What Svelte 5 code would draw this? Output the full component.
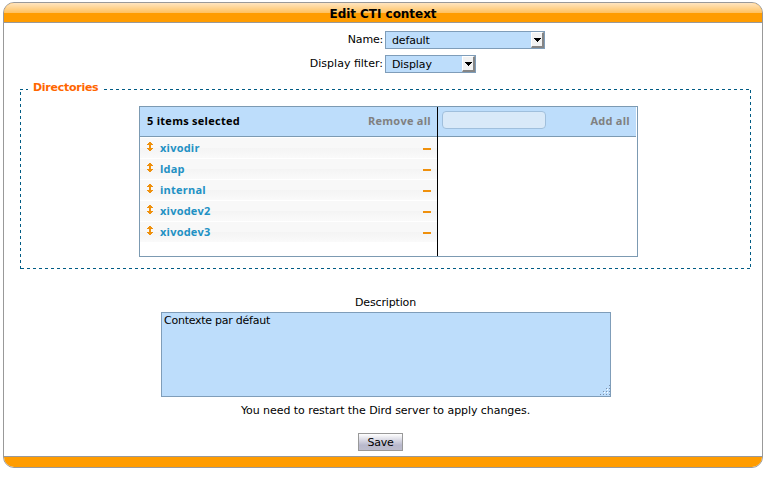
<script>
  const items = ['xivodir', 'ldap', 'internal', 'xivodev2', 'xivodev3'];
</script>

{#snippet selectBox(label, kind)}
  <div class="select {kind}" role="combobox" aria-expanded="false" aria-controls="none" tabindex="0">
    <span>{label}</span>
    <i class="drop"><svg width="7" height="4" shape-rendering="crispEdges"><path d="M0 0H7V1H6V2H5V3H4V4H3V3H2V2H1V1H0Z" /></svg></i>
  </div>
{/snippet}

<main class="panel">
  <header><span class="title">Edit CTI context</span></header>
  <section class="body">
    <div class="field first"><span class="label name-label">Name:</span>{@render selectBox('default', 'name')}</div>
    <div class="field"><span class="label filter-label">Display filter:</span>{@render selectBox('Display', 'filter')}</div>

    <div class="group">
      <div class="legend"><span>Directories</span></div>
      <div class="picker">
        <div class="selected">
          <div class="bar"><span class="count">5 items selected</span><span class="action remove">Remove all</span></div>
          <ul>
            {#each items as item}
              <li>
                <svg class="sort" width="6" height="9" viewBox="0 0 6 9" shape-rendering="crispEdges"><path d="M2 0H4V1H5V2H6V3H4V6H6V7H5V8H4V9H2V8H1V7H0V6H2V3H0V2H1V1H2Z" /></svg>
                <span class="item">{item}</span>
                <i class="minus"></i>
              </li>
            {/each}
          </ul>
        </div>
        <div class="available">
          <div class="bar"><div class="search"></div><span class="action add">Add all</span></div>
        </div>
      </div>
    </div>

    <div class="desc-label"><span>Description</span></div>
    <div class="textarea"><span>Contexte par défaut</span>
      <svg class="grip" width="10" height="10" shape-rendering="crispEdges">
        {#each [0, 1, 2, 3] as r}
          {#each [0, 1, 2, 3] as c}
            {#if r + c >= 3}
              <rect x={c * 3} y={r * 3} width="1" height="1" fill="#7c90aa" />
              <rect x={c * 3 + 1} y={r * 3 + 1} width="1" height="1" fill="#fff" />
            {/if}
          {/each}
        {/each}
      </svg>
    </div>
    <p class="note"><span>You need to restart the Dird server to apply changes.</span></p>
    <div class="save"><span>Save</span></div>
  </section>
  <footer></footer>
</main>

<style>
  :global(body) { margin: 0; background: #fff; }
  .panel {
    box-sizing: border-box; width: 760px; height: 466px; margin: 2px 0 0 3px;
    border: 1px solid #999; border-radius: 11px; overflow: hidden;
    font: 11px/14px "DejaVu Sans", Verdana, sans-serif; color: #000;
    display: flex; flex-direction: column;
  }
  span { white-space: nowrap; }
  header {
    height: 19px; border-bottom: 1px solid #999; text-align: center; flex: none;
    background: linear-gradient(#ffe5c0, #ffc15f) 0 0 / 100% 10px no-repeat #ff9c00;
    font-weight: bold; font-size: 12px; line-height: 22px;
  }
  .title { letter-spacing: -0.04px; }
  .body { flex: 1; min-height: 0; display: flex; flex-direction: column; }
  footer { height: 10px; flex: none; background: #ff9c00; border-top: 1px solid #999; }
  .field { display: flex; height: 18px; margin-top: 6px; }
  .field.first { margin-top: 8px; }
  .label { width: 379px; margin-right: 2px; text-align: right; line-height: 17px; }
  .name-label { letter-spacing: -0.2px; }
  .select {
    box-sizing: border-box; height: 18px; border: 1px solid #7f9db9; background: #bdddfb;
    display: flex; justify-content: space-between; padding-left: 6px; line-height: 17px;
  }
  .name { width: 160px; letter-spacing: -0.15px; }
  .filter { width: 91px; letter-spacing: -0.1px; }
  .drop {
    box-sizing: border-box; width: 13px; height: 16px; background: #f2f2f2;
    border: solid #858585; border-width: 0 2px 2px 0; border-left: 1px solid #fff; border-top: 1px solid #fff;
    display: flex; align-items: center; justify-content: center;
  }
  .group {
    box-sizing: border-box; width: 731px; height: 180px; margin: 16px 0 0 16px; flex: none;
    background:
      repeating-linear-gradient(90deg, #005b84 0 3px, transparent 3px 6px) 0 0 / 100% 1px no-repeat,
      repeating-linear-gradient(90deg, #005b84 0 3px, transparent 3px 6px) 1px 100% / 730px 1px no-repeat,
      repeating-linear-gradient(180deg, #005b84 0 3px, transparent 3px 6px) 0 3px / 1px 177px no-repeat,
      repeating-linear-gradient(180deg, #005b84 0 3px, transparent 3px 6px) 100% 1px / 1px 177px no-repeat;
  }
  .legend {
    box-sizing: border-box; width: 76px; height: 14px; margin: -8px 0 0 8px; padding-left: 5px;
    background: #fff; font-weight: bold; color: #ff6600; letter-spacing: -0.27px;
  }
  .picker {
    box-sizing: border-box; width: 499px; height: 151px; margin: 11px 0 0 119px;
    border: 1px solid #7c9ab2; display: flex;
    font-family: "Open Sans", "Noto Sans", sans-serif;
  }
  .selected { width: 297px; border-right: 1px solid #000; }
  .available { width: 198px; }
  .bar {
    box-sizing: border-box; height: 30px; background: #bdddfb; border-bottom: 1px solid #7c9ab2;
    display: flex; justify-content: space-between; align-items: center; font-weight: bold;
    padding: 0 6px 0 7px;
  }
  .bar span { margin-bottom: 2px; }
  .available .bar { padding: 0 6px 0 4px; }
  .count { letter-spacing: 0.27px; }
  .action { color: #808080; letter-spacing: 0.27px; }
  .search {
    box-sizing: border-box; width: 104px; height: 18px; margin-bottom: 3px;
    border: 1px solid #a0bfdc; border-radius: 4px; background: #d9e9f8;
  }
  ul { list-style: none; margin: 1px 0 0; padding: 0; }
  li {
    display: flex; align-items: center; height: 20px; margin-bottom: 1px; padding: 0 6px 0 7px;
    background: linear-gradient(#f8f8f8 0 50%, #f4f4f4 50%, #fafafa);
    color: #2291c4; font-weight: bold;
  }
  .sort { fill: #ef900c; margin: 0 7px 3px 0; }
  .item { flex: 1; padding-bottom: 1px; letter-spacing: 0.22px; }
  .minus { width: 8px; height: 2px; background: #ef900c; margin-top: 2px; }
  .desc-label { text-align: center; margin: 27px 0 2px 5px; letter-spacing: -0.15px; }
  .textarea {
    box-sizing: border-box; width: 450px; height: 85px; margin-left: 157px; flex: none;
    border: 1px solid #7f9db9; background: #bdddfb; padding: 1px 2px; position: relative;
    letter-spacing: -0.25px;
  }
  .grip { position: absolute; right: 0; bottom: 1px; }
  .note { margin: 7px 0 0 5px; text-align: center; letter-spacing: -0.06px; }
  .save {
    box-sizing: border-box; width: 45px; height: 18px; margin: 15px 0 0 354px; text-align: center;
    line-height: 17px; border: 1px solid #999; background: linear-gradient(#fff, #b8b8cc 70%, #bdbdcd);
    letter-spacing: -0.3px;
  }
</style>
